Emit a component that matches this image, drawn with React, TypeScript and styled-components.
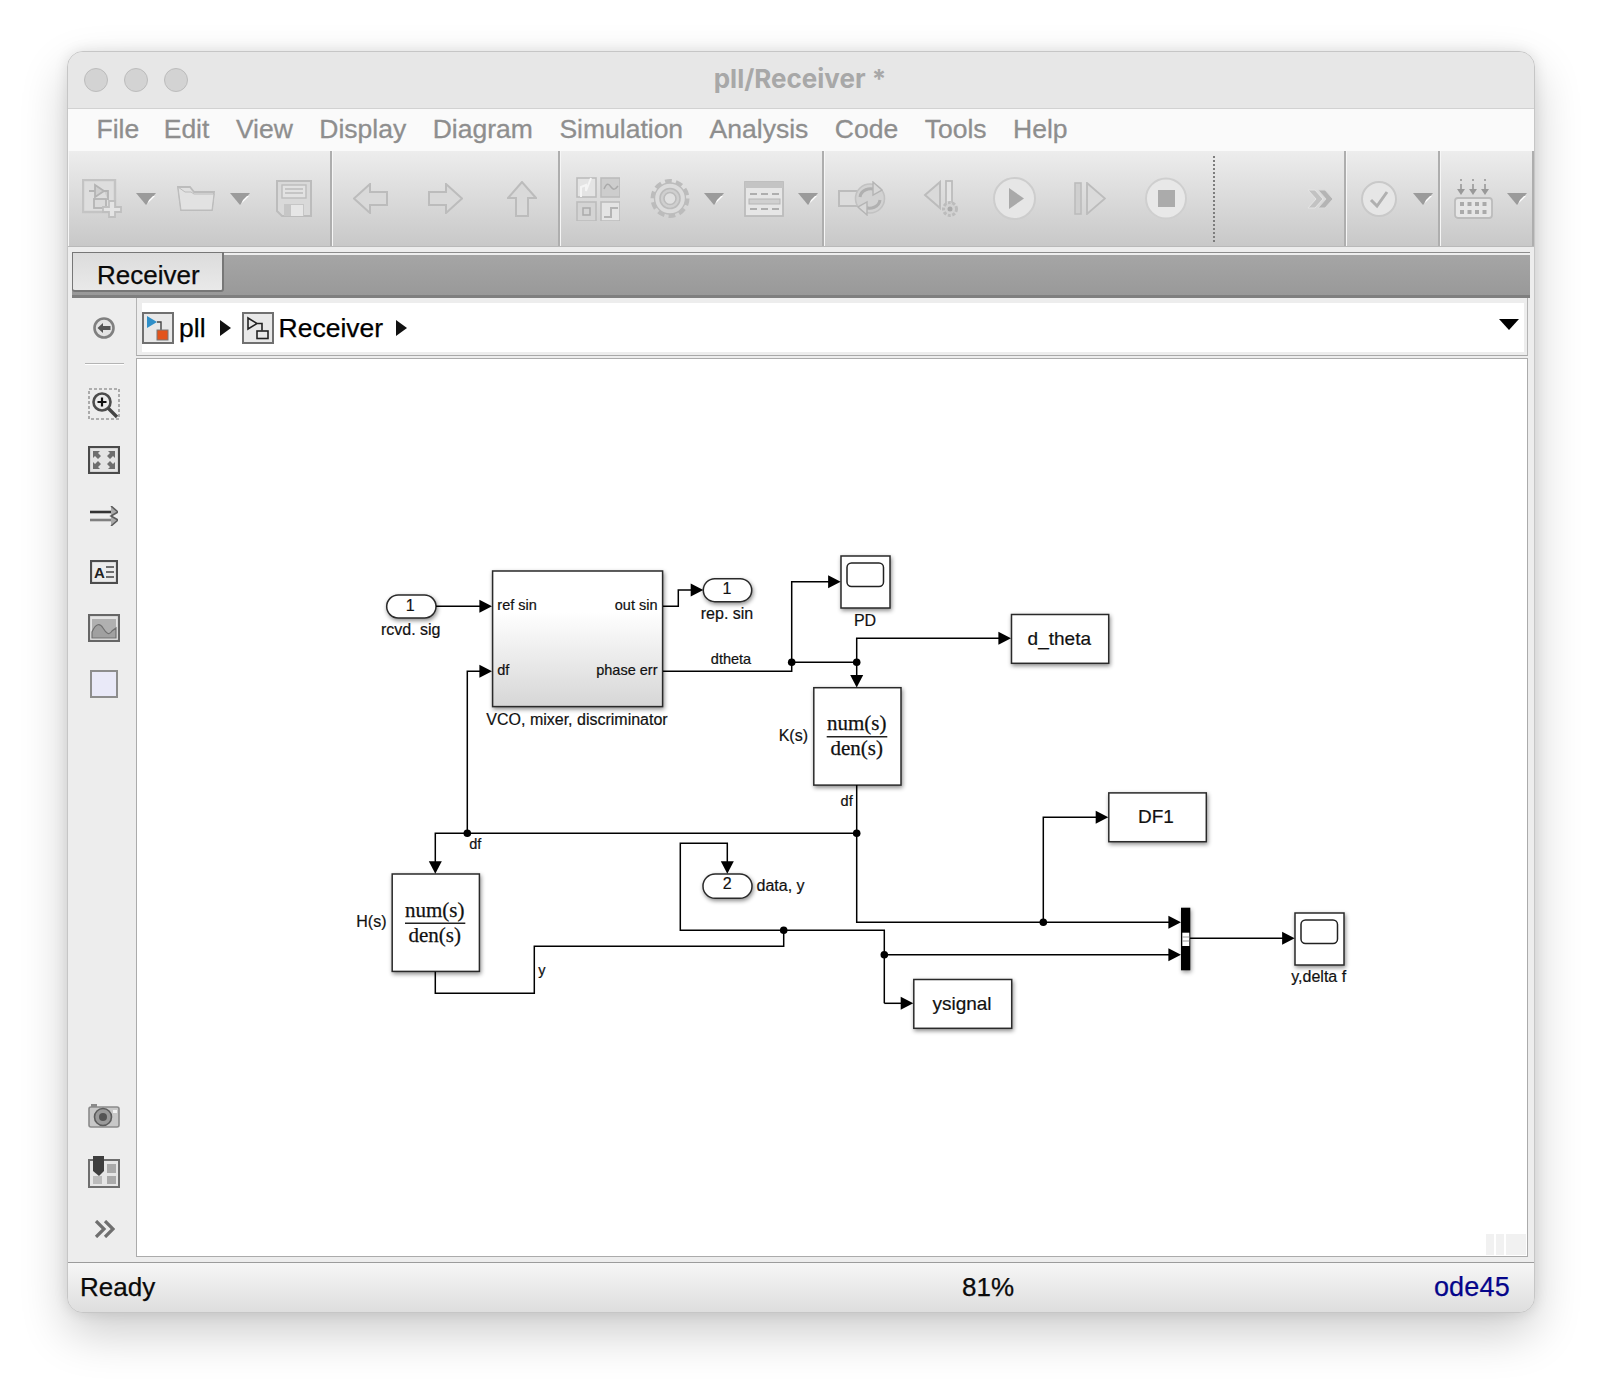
import styled, { createGlobalStyle } from 'styled-components';

const Global = createGlobalStyle`
  html, body {
    margin: 0;
    background: #fff;
  }
  * {
    box-sizing: border-box;
  }
`;

const Page = styled.div`
  width: 1602px;
  height: 1396px;
  padding: 51px 0 0 67px;
  font-family: 'Liberation Sans', Arial, sans-serif;
  overflow: hidden;
`;
const Window = styled.div`
  width: 1468px;
  height: 1262px;
  display: flex;
  flex-direction: column;
  background: #ededed;
  border: 1px solid #c6c6c6;
  border-radius: 16px;
  box-shadow: 0 20px 48px rgba(0, 0, 0, 0.2), 0 0 14px rgba(0, 0, 0, 0.1);
  overflow: hidden;
`;
const TitleBar = styled.div`
  position: relative;
  height: 57px;
  flex: none;
  display: flex;
  align-items: center;
  justify-content: center;
  background: #e7e7e7;
  border-bottom: 1px solid #d2d2d2;
`;
const Lights = styled.div`
  position: absolute;
  left: 16px;
  top: 16px;
  display: flex;
  gap: 16px;
`;
const Light = styled.span`
  width: 24px;
  height: 24px;
  border-radius: 50%;
  background: #d3d3d3;
  border: 1px solid #bcbcbc;
`;
const Title = styled.div`
  font-family: Inter, sans-serif;
  font-size: 26px;
  font-weight: 700;
  color: #a8a8a8;
  margin: 0 0 4px -2px;
`;
const MenuBar = styled.div`
  height: 42px;
  flex: none;
  display: flex;
  align-items: center;
  gap: 26.5px;
  padding: 0 0 2px 28.5px;
  background: #fafafa;
`;
const MenuItem = styled.span`
  font-size: 26.5px;
  color: #8e8e8e;
  -webkit-text-stroke: 0.3px #8e8e8e;
  &:first-child {
    margin-right: -2px;
  }
`;
const Toolbar = styled.div`
  height: 96px;
  flex: none;
  display: flex;
  background: linear-gradient(#ededed, #c8c8c8);
  border-bottom: 1px solid #b9b9b9;
`;
const Group = styled.div<{ $w: number }>`
  width: ${(p) => p.$w}px;
  flex: none;
  display: flex;
  align-items: center;
  border-left: 1px solid #f6f6f6;
  border-right: 2px solid #aeaeae;
`;
const Tool = styled.span<{ $m: number }>`
  display: inline-flex;
  flex: none;
  margin-left: ${(p) => p.$m}px;
`;
const DottedRule = styled.span`
  align-self: stretch;
  margin: 5px 0 4px 26px;
  border-left: 2px dotted #7d7d7d;
`;
const PushRight = styled.span`
  display: inline-flex;
  margin: 0 10px 0 auto;
`;
const TabStrip = styled.div`
  height: 46px;
  flex: none;
  margin: 5px 4px 0;
  display: flex;
  background: linear-gradient(#a6a6a6, #999);
  border-top: 1px solid #8c8c8c;
  box-shadow: inset 0 2px 0 #eee;
  border-bottom: 3px solid #7f7f7f;
`;
const Tab = styled.div`
  width: 152px;
  height: 40px;
  margin-top: -1px;
  padding: 7px 0 0 24px;
  display: flex;
  align-items: center;
  font-size: 26px;
  color: #0a0a0a;
  -webkit-text-stroke: 0.25px #0a0a0a;
  background: linear-gradient(#dcdcdc, #e9e9e9);
  border: 1px solid #777;
  border-width: 1px 2px 2px 1px;
  border-radius: 0 0 3px 3px;
`;
const Main = styled.div`
  flex: 1;
  min-height: 0;
  display: flex;
`;
const Rail = styled.div`
  width: 68px;
  flex: none;
  display: flex;
  flex-direction: column;
  align-items: center;
  padding: 0 0 19px 4px;
  & > svg {
    flex: none;
  }
`;
const RailRule = styled.div`
  width: 39px;
  height: 2px;
  flex: none;
  margin: 24px 0 23px;
  background: #b4b4b4;
  border-bottom: 1px solid #fff;
`;
const RailGap = styled.div<{ $h: number }>`
  height: ${(p) => p.$h}px;
  flex: none;
`;
const RailSpacer = styled.div`
  flex: 1;
`;
const Column = styled.div`
  width: 1392px;
  flex: none;
  display: flex;
  flex-direction: column;
`;
const CrumbRow = styled.div`
  height: 58px;
  flex: none;
  padding: 5px 3px 3px 5px;
  border-left: 1px solid #b4b4b4;
  border-right: 1px solid #b4b4b4;
  border-bottom: 1px solid #a8a8a8;
`;
const Crumbs = styled.div`
  position: relative;
  height: 49px;
  display: flex;
  align-items: center;
  background: #fff;
`;
const CrumbText = styled.span<{ $m: number }>`
  margin-left: ${(p) => p.$m}px;
  padding-top: 2px;
  font-size: 26.5px;
  color: #000;
  -webkit-text-stroke: 0.25px #000;
`;
const CrumbArrow = styled.span<{ $m: number }>`
  margin: 0 11px 0 ${(p) => p.$m}px;
  width: 0;
  height: 0;
  border-style: solid;
  border-width: 8.5px 0 8.5px 11px;
  border-color: transparent transparent transparent #111;
`;
const CrumbMenu = styled.span`
  position: absolute;
  right: 5px;
  top: 16px;
  width: 0;
  height: 0;
  border-style: solid;
  border-width: 11px 10px 0;
  border-color: #000 transparent transparent;
`;
const Canvas = styled.div`
  position: relative;
  flex: 1;
  min-height: 0;
  margin-top: 2px;
  background: #fff;
  border: 1px solid #ababab;
  svg {
    display: block;
  }
`;
const Watermark = styled.div`
  position: absolute;
  right: 1px;
  bottom: 1px;
  display: flex;
  gap: 2px;
`;
const WatermarkCell = styled.span<{ $w: number }>`
  width: ${(p) => p.$w}px;
  height: 21px;
  background: #f1f1f1;
`;
const StatusBar = styled.div`
  height: 50px;
  flex: none;
  margin-top: 5px;
  display: grid;
  grid-template-columns: 882px 1fr auto;
  align-items: center;
  padding: 0 24px 1px 12px;
  border-top: 1px solid #9c9c9c;
  background: linear-gradient(#f6f6f6, #dedede);
  font-size: 26px;
  color: #0a0a0a;
  -webkit-text-stroke: 0.25px #0a0a0a;
`;
const Ode = styled.span`
  font-size: 27px;
  letter-spacing: 0.2px;
  color: #05058a;
  -webkit-text-stroke: 0.25px #05058a;
`;

/* diagram parts */
const Wire = styled.polyline`
  fill: none;
  stroke: #000;
  stroke-width: 1.5;
`;
const Head = styled.polygon`
  fill: #000;
`;
const Junction = styled.circle`
  fill: #000;
`;
const BlockShape = styled.rect`
  fill: #fff;
  stroke: #2a2a2a;
  stroke-width: 1.5;
  filter: drop-shadow(1.5px 2px 2px rgba(0, 0, 0, 0.45));
`;
const SubsystemShape = styled(BlockShape)`
  fill: url(#subsystem);
`;
const ScopeScreen = styled.rect`
  fill: #fff;
  stroke: #222;
  stroke-width: 1.5;
`;
const Label = styled.text<{ $size?: number }>`
  font-family: 'Liberation Sans', Arial, sans-serif;
  font-size: ${(p) => p.$size ?? 16}px;
  fill: #111;
  stroke: #111;
  stroke-width: 0.2;
`;
const Formula = styled.text`
  font-family: 'Liberation Serif', 'Times New Roman', serif;
  font-size: 21px;
  fill: #111;
  stroke: #111;
  stroke-width: 0.25;
`;

const wires: string[] = [
  '436,606.3 480,606.3',
  '663,606.3 678.3,606.3 678.3,590 691,590',
  '663,671.3 791.7,671.3 791.7,581.7 829,581.7',
  '791.7,662.3 856.7,662.3 856.7,676',
  '856.7,662.3 856.7,638.3 999,638.3',
  '856.7,785 856.7,922.3 1170,922.3',
  '1043.3,922.3 1043.3,817.3 1096,817.3',
  '856.7,833.3 435.3,833.3 435.3,862',
  '467.3,833.3 467.3,671.3 480,671.3',
  '435.3,971.7 435.3,993.3 534.3,993.3 534.3,946.3 783.7,946.3 783.7,930.3',
  '884.3,1003.3 884.3,930.3 680.3,930.3 680.3,843.3 727.3,843.3 727.3,862',
  '884.3,1003.3 902,1003.3',
  '884.3,954.7 1170,954.7',
  '1190,938.3 1283,938.3',
];

const rightHeads: [number, number][] = [
  [492, 606.3],
  [492, 671.3],
  [703.3, 590],
  [840.7, 581.7],
  [1011, 638.3],
  [1108.3, 817.3],
  [913.3, 1003.3],
  [1181, 922.3],
  [1181, 954.7],
  [1294.7, 938.3],
];
const downHeads: [number, number][] = [
  [856.7, 687.5],
  [435.3, 873.8],
  [727.3, 873.8],
];
const junctions: [number, number][] = [
  [791.7, 662.3],
  [856.7, 662.3],
  [856.7, 833.3],
  [467.3, 833.3],
  [783.7, 930.3],
  [884.3, 954.7],
  [1043.3, 922.3],
];

const textBlocks = [
  { x: 1011.5, y: 614.5, w: 97.2, h: 48.8, name: 'd_theta', tx: 1059.3, ty: 644.8 },
  { x: 1108.8, y: 792.9, w: 97.5, h: 48.8, name: 'DF1', tx: 1156, ty: 822.6 },
  { x: 913.8, y: 979.5, w: 97.9, h: 48.8, name: 'ysignal', tx: 962, ty: 1009.6 },
];
const transferBlocks = [
  { x: 813.8, y: 687.7, cx: 856.7, num: 729.5, bar: 736.7, den: 755, l: 826.7, r: 887.3 },
  { x: 392.2, y: 874, cx: 434.7, num: 916.8, bar: 923.3, den: 942, l: 405, r: 465.3 },
];
const ports = [
  { x: 386.7, y: 595, w: 49.3, h: 23, n: '1', tx: 410.3, ty: 611 },
  { x: 703.3, y: 578.7, w: 48.4, h: 23, n: '1', tx: 727, ty: 594 },
  { x: 703, y: 874, w: 49, h: 24.3, n: '2', tx: 727.3, ty: 889 },
];
const scopes = [
  { x: 841, y: 556 },
  { x: 1295, y: 913 },
];

const Diagram = () => (
  <svg width={1390} height={896} viewBox="137 359 1390 896">
    <defs>
      <linearGradient id="subsystem" x1="0" y1="0" x2="0" y2="1">
        <stop offset="0.3" stopColor="#fff" />
        <stop offset="1" stopColor="#d6d6d6" />
      </linearGradient>
    </defs>

    <SubsystemShape x={492.6} y={571} width={170} height={135.6} />
    {textBlocks.map((b) => (
      <g key={b.name}>
        <BlockShape x={b.x} y={b.y} width={b.w} height={b.h} />
        <Label $size={19} x={b.tx} y={b.ty} textAnchor="middle">{b.name}</Label>
      </g>
    ))}
    {transferBlocks.map((b) => (
      <g key={b.x}>
        <BlockShape x={b.x} y={b.y} width={87.2} height={97.4} />
        <Formula x={b.cx} y={b.num} textAnchor="middle">num(s)</Formula>
        <line x1={b.l} x2={b.r} y1={b.bar} y2={b.bar} stroke="#222" strokeWidth={1.4} />
        <Formula x={b.cx} y={b.den} textAnchor="middle">den(s)</Formula>
      </g>
    ))}
    {ports.map((p) => (
      <g key={p.tx}>
        <BlockShape x={p.x} y={p.y} width={p.w} height={p.h} rx={p.h / 2} />
        <Label x={p.tx} y={p.ty} textAnchor="middle">{p.n}</Label>
      </g>
    ))}
    {scopes.map((s) => (
      <g key={s.x}>
        <BlockShape x={s.x} y={s.y} width={49} height={52} />
        <ScopeScreen x={s.x + 6} y={s.y + 7} width={36.5} height={23.5} rx={4.5} />
      </g>
    ))}

    {wires.map((w) => (
      <Wire key={w} points={w} />
    ))}
    {rightHeads.map(([x, y]) => (
      <Head key={`${x}-${y}`} points={`${x},${y} ${x - 12.6},${y - 6.5} ${x - 12.6},${y + 6.5}`} />
    ))}
    {downHeads.map(([x, y]) => (
      <Head key={`${x}-${y}`} points={`${x},${y} ${x - 6.5},${y - 12.6} ${x + 6.5},${y - 12.6}`} />
    ))}
    {junctions.map(([x, y]) => (
      <Junction key={`${x}-${y}`} cx={x} cy={y} r={3.8} />
    ))}

    <rect x={1181} y={907.7} width={9.3} height={62.6} fill="#000" filter="drop-shadow(1.5px 2px 2px rgba(0,0,0,.4))" />
    <rect x={1182.3} y={932.7} width={7} height={13.3} fill="#fff" />
    <path d="M1182.3 937h7M1182.3 941h7" stroke="#999" strokeWidth={1} />

    <Label $size={14.5} x={497.3} y={610}>ref sin</Label>
    <Label $size={14.5} x={497.3} y={675}>df</Label>
    <Label $size={14.5} x={657.5} y={610} textAnchor="end">out sin</Label>
    <Label $size={14.5} x={657.5} y={675} textAnchor="end">phase err</Label>
    <Label x={577} y={725} textAnchor="middle">VCO, mixer, discriminator</Label>
    <Label x={410.7} y={634.5} textAnchor="middle">rcvd. sig</Label>
    <Label x={727} y={619} textAnchor="middle">rep. sin</Label>
    <Label $size={14.5} x={731} y={664} textAnchor="middle">dtheta</Label>
    <Label x={865} y={626} textAnchor="middle">PD</Label>
    <Label x={808} y={741} textAnchor="end">K(s)</Label>
    <Label x={386.5} y={927.3} textAnchor="end">H(s)</Label>
    <Label $size={14.5} x={852.7} y={805.7} textAnchor="end">df</Label>
    <Label $size={14.5} x={469.3} y={849}>df</Label>
    <Label $size={14.5} x={538.3} y={975}>y</Label>
    <Label x={756.5} y={890.7}>data, y</Label>
    <Label x={1318.7} y={981.7} textAnchor="middle">y,delta f</Label>
  </svg>
);

/* toolbar icons, all in the washed-out disabled state */
const line = '#bcbcbc';
const fill = '#d9d9d9';

const Drop = () => (
  <svg width={20} height={12} viewBox="0 0 20 12">
    <polygon points="0,0 20,0 10,12" fill="#9b9b9b" />
    <polygon points="13,7 17,3 19,3 11,11" fill="#fff" />
  </svg>
);
const NewModel = () => (
  <svg width={40} height={39} viewBox="0 0 40 39" fill="none">
    <rect x="1" y="1" width="32" height="32" fill="#dedede" stroke="#c4c4c4" strokeWidth="2.4" />
    <path d="M7 12h6M13 6v12l9-6zM22 12h4v9" stroke="#b4b4b4" strokeWidth="1.8" fill="#cfcfcf" />
    <rect x="12" y="20" width="12" height="9" fill="#dadada" stroke="#b4b4b4" strokeWidth="1.8" />
    <path d="M27 22h6v6h6v5h-6v5h-6v-5h-6v-5h6z" fill="#e4e4e4" stroke="#bfbfbf" strokeWidth="1.8" />
  </svg>
);
const Folder = () => (
  <svg width={38} height={25} viewBox="0 0 38 25">
    <path d="M1 1h12l4 5h20l-2 18H4z" fill="#e0e0e0" stroke={line} strokeWidth="1.8" />
    <path d="M1 1l3 23h31l2-16H17l-3-2H8z" fill="#e2e2e2" stroke={line} strokeWidth="1" />
  </svg>
);
const Save = () => (
  <svg width={36} height={37} viewBox="0 0 36 37">
    <path d="M1 1h34v35H6l-5-5z" fill={fill} stroke={line} strokeWidth="2" />
    <rect x="6" y="5" width="24" height="13" fill="#e2e2e2" stroke={line} strokeWidth="1.4" />
    <path d="M9 9h18M9 13h18" stroke={line} strokeWidth="1.4" />
    <rect x="8" y="24" width="20" height="12" fill="#c6c6c6" />
    <rect x="15" y="25" width="12" height="11" fill="#e6e6e6" />
  </svg>
);
const LeftArrow = () => (
  <svg width={35} height={31} viewBox="0 0 35 31">
    <path d="M1 15.5L17 1v8h17v13H17v8z" fill={fill} stroke={line} strokeWidth="2" />
  </svg>
);
const RightArrow = () => (
  <svg width={35} height={31} viewBox="0 0 35 31">
    <path d="M34 15.5L18 1v8H1v13h17v8z" fill={fill} stroke={line} strokeWidth="2" />
  </svg>
);
const UpArrow = () => (
  <svg width={30} height={36} viewBox="0 0 30 36">
    <path d="M15 1L1 17h8v18h12V17h8z" fill={fill} stroke={line} strokeWidth="2" />
  </svg>
);
const Library = () => (
  <svg width={44} height={44} viewBox="0 0 44 44">
    <rect x="1" y="1" width="19" height="19" fill="#e4e4e4" stroke={line} strokeWidth="1.6" />
    <path d="M5 20V10l5-2v6l5-13" fill="none" stroke="#f4f4f4" strokeWidth="2" />
    <rect x="25" y="1" width="19" height="19" fill="#cdcdcd" stroke={line} strokeWidth="1.6" />
    <path d="M28 12c3-7 5-5 7-2s4 3 7-1" fill="none" stroke="#aaa" strokeWidth="1.5" />
    <rect x="1" y="25" width="19" height="19" fill="#d4d4d4" stroke={line} strokeWidth="1.6" />
    <rect x="7" y="31" width="7" height="7" fill="none" stroke="#aaa" strokeWidth="1.5" />
    <rect x="25" y="25" width="19" height="19" fill="#e4e4e4" stroke={line} strokeWidth="1.6" />
    <path d="M28 40h7v-9h7" fill="none" stroke="#b4b4b4" strokeWidth="2" />
  </svg>
);
const Gear = () => (
  <svg width={40} height={41} viewBox="0 0 40 41" fill="none">
    <circle cx="20" cy="20.5" r="17" stroke={line} strokeWidth="5" strokeDasharray="6.6 4.08" />
    <circle cx="20" cy="20.5" r="15.5" fill="#dcdcdc" stroke={line} strokeWidth="1.4" />
    <circle cx="20" cy="20.5" r="10" fill="#cfcfcf" stroke={line} strokeWidth="1.6" />
    <circle cx="20" cy="20.5" r="6" fill="#e0e0e0" stroke={line} strokeWidth="1.6" />
  </svg>
);
const TableIcon = () => (
  <svg width={40} height={36} viewBox="0 0 40 36">
    <rect x="1" y="1" width="38" height="34" fill="#e6e6e6" stroke={line} strokeWidth="1.8" />
    <rect x="1" y="1" width="38" height="6" fill="#c4c4c4" />
    <path d="M6 13h7M17 13h7M28 13h7M6 28h7M17 28h7M28 28h7" stroke="#aeaeae" strokeWidth="2" />
    <rect x="5" y="18" width="31" height="5" fill="#d0d0d0" stroke="#b6b6b6" strokeWidth="1" />
  </svg>
);
const SimLoop = () => (
  <svg width={48} height={35} viewBox="0 0 48 35" fill="none">
    <rect x="1" y="10" width="18" height="15" fill="#dcdcdc" stroke={line} strokeWidth="2" />
    <circle cx="32" cy="17.5" r="14.5" fill="#d2d2d2" stroke="#c2c2c2" strokeWidth="1.6" />
    <path d="M22 16c1-7 9-10 16-7" stroke="#b0b0b0" strokeWidth="3" />
    <polygon points="35,1 44,9 35,14" fill="#d8d8d8" stroke="#b4b4b4" strokeWidth="1.4" />
    <path d="M42 19c-1 7-9 10-16 7" stroke="#b0b0b0" strokeWidth="3" />
    <polygon points="29,34 20,26 29,21" fill="#d8d8d8" stroke="#b4b4b4" strokeWidth="1.4" />
  </svg>
);
const StepBack = () => (
  <svg width={37} height={38} viewBox="0 0 37 38">
    <polygon points="2,15 17,2 17,28" fill="#d9d9d9" stroke={line} strokeWidth="2" />
    <rect x="23" y="1" width="6" height="26" fill="#e4e4e4" stroke={line} strokeWidth="1.8" />
    <circle cx="27" cy="29" r="6.5" fill="#d2d2d2" stroke={line} strokeWidth="3" strokeDasharray="3 1.6" />
    <circle cx="27" cy="29" r="2.5" fill="#aaa" />
  </svg>
);
const Play = () => (
  <svg width={43} height={43} viewBox="0 0 43 43">
    <circle cx="21.5" cy="21.5" r="20.5" fill="#e6e6e6" stroke="#cdcdcd" strokeWidth="2" />
    <polygon points="16,11 16,32 31,21.5" fill="#a9a9a9" />
  </svg>
);
const StepForward = () => (
  <svg width={32} height={33} viewBox="0 0 32 33">
    <rect x="1" y="1" width="6" height="31" fill="#cfcfcf" stroke={line} strokeWidth="1.6" />
    <polygon points="13,1 31,16.5 13,32" fill="#dadada" stroke={line} strokeWidth="1.8" />
  </svg>
);
const Stop = () => (
  <svg width={42} height={43} viewBox="0 0 42 43">
    <circle cx="21" cy="21.5" r="20" fill="#e8e8e8" stroke="#cfcfcf" strokeWidth="2" />
    <rect x="13" y="13" width="17" height="17" fill="#ababab" />
  </svg>
);
const Chevrons = () => (
  <svg width={27} height={20} viewBox="0 0 27 20" fill="none">
    <path d="M1 1h7l8 9-8 9H1l8-9z" fill="#c2c2c2" stroke="#e4e4e4" strokeWidth="1" />
    <path d="M11 1h7l8 9-8 9h-7l8-9z" fill="#b4b4b4" stroke="#dadada" strokeWidth="1" />
  </svg>
);
const Check = () => (
  <svg width={36} height={36} viewBox="0 0 36 36" fill="none">
    <circle cx="18" cy="18" r="17" fill="#e6e6e6" stroke="#c9c9c9" strokeWidth="2" />
    <path d="M10 19l6 6 10-14" stroke="#b0b0b0" strokeWidth="3" />
  </svg>
);
const KeyboardIcon = () => (
  <svg width={39} height={40} viewBox="0 0 39 40">
    <rect x="1" y="19" width="37" height="20" rx="3" fill="#e6e6e6" stroke={line} strokeWidth="1.8" />
    {[0, 1, 2, 3].map((i) => (
      <g key={i} fill="#aaa">
        <rect x={6 + i * 7.5} y="23" width="4" height="4" />
        <rect x={6 + i * 7.5} y="31" width="4" height="4" />
      </g>
    ))}
    {[7, 19, 31].map((x) => (
      <path key={x} d={`M${x} 0v2M${x} 5v7`} stroke="#999" strokeWidth="1.6" />
    ))}
    {[7, 19, 31].map((x) => (
      <polygon key={x} points={`${x - 4},10 ${x + 4},10 ${x},16`} fill="#999" />
    ))}
  </svg>
);

/* left rail icons */
const BackIcon = () => (
  <svg width={22} height={22} viewBox="0 0 22 22">
    <circle cx="11" cy="11" r="9.5" fill="#e4e4e4" stroke="#808080" strokeWidth="2.6" />
    <path d="M4.5 11l5.5-5v3h7.5v4H10v3z" fill="#555" />
  </svg>
);
const ZoomIcon = () => (
  <svg width={32} height={32} viewBox="0 0 32 32" fill="none">
    <rect x="1" y="1" width="30" height="30" stroke="#999" strokeWidth="1.6" strokeDasharray="3 2" />
    <circle cx="14" cy="14" r="8.5" fill="#ececec" stroke="#4d4d4d" strokeWidth="2.6" />
    <path d="M20 20l9 9" stroke="#444" strokeWidth="3.4" />
    <path d="M14 9.5v9M9.5 14h9" stroke="#111" strokeWidth="2.2" />
  </svg>
);
const FitIcon = () => (
  <svg width={32} height={28} viewBox="0 0 32 28" fill="none">
    <rect x="1" y="1" width="30" height="26" fill="#e4e4e4" stroke="#4a4a4a" strokeWidth="2.2" />
    <path d="M5 5h7l-2 2 3 3-3 3-3-3-2 2zM27 5h-7l2 2-3 3 3 3 3-3 2 2zM5 23h7l-2-2 3-3-3-3-3 3-2-2zM27 23h-7l2-2-3-3 3-3 3 3 2-2z" fill="#6e6e6e" />
  </svg>
);
const SignalIcon = () => (
  <svg width={28} height={20} viewBox="0 0 28 20" fill="none">
    <path d="M0 6h24" stroke="#333" strokeWidth="2.6" />
    <path d="M0 14h24" stroke="#808080" strokeWidth="2.6" />
    <path d="M21 0l7 6-7 4 7 4-7 6" stroke="#5c5c5c" strokeWidth="1.6" fill="#aaa" />
  </svg>
);
const NoteIcon = () => (
  <svg width={28} height={24} viewBox="0 0 28 24">
    <rect x="1" y="1" width="26" height="22" fill="#ececec" stroke="#4d4d4d" strokeWidth="2.2" />
    <text x="4" y="18" fontFamily="Liberation Sans, sans-serif" fontWeight="700" fontSize="15" fill="#222">A</text>
    <path d="M16 7h8M16 12h8M16 17h8" stroke="#6e6e6e" strokeWidth="2" />
  </svg>
);
const PictureIcon = () => (
  <svg width={32} height={28} viewBox="0 0 32 28">
    <rect x="1" y="1" width="30" height="26" fill="#e4e4e4" stroke="#666" strokeWidth="2.2" />
    <rect x="4" y="5" width="24" height="19" fill="#b0b0b0" />
    <path d="M4 18c4-9 8-9 11-4s6 8 9 3l4-3v10H4z" fill="#a0a0a0" stroke="#707070" strokeWidth="1.2" />
  </svg>
);
const AreaIcon = () => (
  <svg width={28} height={28} viewBox="0 0 28 28">
    <rect x="1" y="1" width="26" height="26" fill="#e9e9f8" stroke="#8d8d8d" strokeWidth="2" />
  </svg>
);
const CameraIcon = () => (
  <svg width={32} height={24} viewBox="0 0 32 24">
    <rect x="1" y="3" width="30" height="20" rx="2" fill="#c8c8c8" stroke="#8a8a8a" strokeWidth="1.6" />
    <rect x="3" y="0" width="6" height="3" fill="#8a8a8a" />
    <circle cx="15" cy="13" r="8.5" fill="#9a9a9a" stroke="#5c5c5c" strokeWidth="1.6" />
    <circle cx="15" cy="13" r="4" fill="#555" />
    <rect x="25" y="6" width="4" height="3" fill="#f2f2f2" />
  </svg>
);
const ViewerIcon = () => (
  <svg width={32} height={32} viewBox="0 0 32 32">
    <rect x="1" y="4" width="30" height="27" fill="#e6e6e6" stroke="#6e6e6e" strokeWidth="2" />
    <rect x="19" y="8" width="9" height="9" fill="#aaa" />
    <rect x="19" y="20" width="9" height="8" fill="#aaa" />
    <rect x="5" y="20" width="9" height="8" fill="#bbb" />
    <path d="M5 0h11v15l-5 5-6-5z" fill="#3e3e3e" />
  </svg>
);
const RailChevrons = () => (
  <svg width={21} height={18} viewBox="0 0 21 18" fill="none">
    <path d="M2 1l8 8-8 8M11 1l8 8-8 8" stroke="#6f6f6f" strokeWidth="3.2" />
  </svg>
);

/* breadcrumb icons */
const ModelIcon = () => (
  <svg width={32} height={32} viewBox="0 0 32 32">
    <rect x="1" y="1" width="30" height="30" fill="#e8e8e8" stroke="#707070" strokeWidth="2" />
    <polygon points="5,4 5,16 15,10" fill="#2f8fc8" />
    <path d="M15 10h4v9" fill="none" stroke="#444" strokeWidth="1.4" />
    <rect x="15" y="18" width="11" height="10" fill="#e2541c" stroke="#777" strokeWidth="1" />
  </svg>
);
const SubsystemIcon = () => (
  <svg width={32} height={32} viewBox="0 0 32 32" fill="none">
    <rect x="1" y="1" width="30" height="30" fill="#e8e8e8" stroke="#707070" strokeWidth="2" />
    <path d="M6 6v11l9-5.5zM15 11.5h5v7" stroke="#222" strokeWidth="1.6" />
    <rect x="15" y="19" width="11" height="7.5" stroke="#222" strokeWidth="1.6" />
  </svg>
);

const menu = ['File', 'Edit', 'View', 'Display', 'Diagram', 'Simulation', 'Analysis', 'Code', 'Tools', 'Help'];

export default function App() {
  return (
    <Page>
      <Global />
      <Window>
        <TitleBar>
          <Lights>
            <Light />
            <Light />
            <Light />
          </Lights>
          <Title>pll/Receiver *</Title>
        </TitleBar>
        <MenuBar>
          {menu.map((m) => (
            <MenuItem key={m}>{m}</MenuItem>
          ))}
        </MenuBar>
        <Toolbar>
          <Group $w={264}>
            <Tool $m={13}><NewModel /></Tool>
            <Tool $m={14}><Drop /></Tool>
            <Tool $m={21}><Folder /></Tool>
            <Tool $m={15}><Drop /></Tool>
            <Tool $m={26}><Save /></Tool>
          </Group>
          <Group $w={228}>
            <Tool $m={20}><LeftArrow /></Tool>
            <Tool $m={40}><RightArrow /></Tool>
            <Tool $m={44}><UpArrow /></Tool>
          </Group>
          <Group $w={264}>
            <Tool $m={15}><Library /></Tool>
            <Tool $m={30}><Gear /></Tool>
            <Tool $m={14}><Drop /></Tool>
            <Tool $m={20}><TableIcon /></Tool>
            <Tool $m={14}><Drop /></Tool>
          </Group>
          <Group $w={522}>
            <Tool $m={13}><SimLoop /></Tool>
            <Tool $m={37}><StepBack /></Tool>
            <Tool $m={33}><Play /></Tool>
            <Tool $m={38}><StepForward /></Tool>
            <Tool $m={39}><Stop /></Tool>
            <DottedRule />
            <PushRight><Chevrons /></PushRight>
          </Group>
          <Group $w={94}>
            <Tool $m={14}><Check /></Tool>
            <Tool $m={16}><Drop /></Tool>
          </Group>
          <Group $w={94}>
            <Tool $m={13}><KeyboardIcon /></Tool>
            <Tool $m={14}><Drop /></Tool>
          </Group>
        </Toolbar>
        <TabStrip>
          <Tab>Receiver</Tab>
        </TabStrip>
        <Main>
          <Rail>
            <RailGap $h={19} />
            <BackIcon />
            <RailRule />
            <ZoomIcon />
            <RailGap $h={26} />
            <FitIcon />
            <RailGap $h={32} />
            <SignalIcon />
            <RailGap $h={34} />
            <NoteIcon />
            <RailGap $h={30} />
            <PictureIcon />
            <RailGap $h={28} />
            <AreaIcon />
            <RailSpacer />
            <CameraIcon />
            <RailGap $h={28} />
            <ViewerIcon />
            <RailGap $h={32} />
            <RailChevrons />
          </Rail>
          <Column>
            <CrumbRow>
              <Crumbs>
                <ModelIcon />
                <CrumbText $m={5}>pll</CrumbText>
                <CrumbArrow $m={14} />
                <SubsystemIcon />
                <CrumbText $m={5}>Receiver</CrumbText>
                <CrumbArrow $m={13} />
                <CrumbMenu />
              </Crumbs>
            </CrumbRow>
            <Canvas>
              <Diagram />
              <Watermark>
                <WatermarkCell $w={8} />
                <WatermarkCell $w={8} />
                <WatermarkCell $w={20} />
              </Watermark>
            </Canvas>
          </Column>
        </Main>
        <StatusBar>
          <span>Ready</span>
          <span>81%</span>
          <Ode>ode45</Ode>
        </StatusBar>
      </Window>
    </Page>
  );
}
